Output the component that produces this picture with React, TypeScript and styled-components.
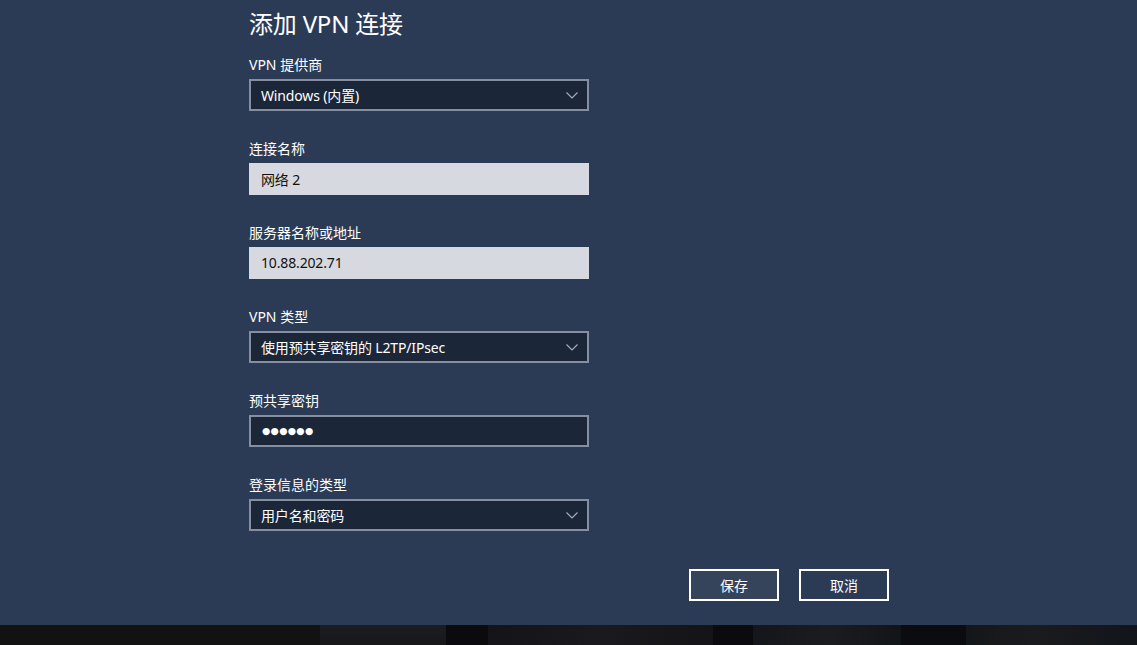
import React from "react";
import styled, { createGlobalStyle } from "styled-components";

const Global = createGlobalStyle`
  html, body { margin: 0; padding: 0; background: #111111; }
  body { font-family: "Noto Sans", "Noto Sans CJK SC", sans-serif; }
  * { box-sizing: border-box; }
`;

const Page = styled.div`
  width: 1137px;
  height: 645px;
  display: flex;
  flex-direction: column;
  overflow: hidden;
`;

const Panel = styled.div`
  height: 625px;
  background: #2b3b55;
  padding: 8px 0 0 249px;
`;

const Form = styled.div`
  width: 640px;
  display: flex;
  flex-direction: column;
`;

const Title = styled.h1`
  margin: 0 0 15px;
  font-family: "Noto Sans", "Noto Sans CJK SC", sans-serif;
  font-weight: 400;
  font-size: 24px;
  letter-spacing: -0.2px;
  line-height: 32px;
  color: #ffffff;
`;

const Field = styled.div`
  width: 340px;
  display: flex;
  flex-direction: column;
  gap: 4px;
  margin-bottom: 28px;
`;

const Label = styled.div`
  font-size: 14px;
  line-height: 20px;
  color: #ffffff;
`;

const Box = styled.div<{ $light?: boolean }>`
  height: 32px;
  display: flex;
  align-items: center;
  justify-content: space-between;
  padding: 0 9px 1px 10px;
  font-size: 14px;
  letter-spacing: -0.15px;
  color: ${(p) => (p.$light ? "#111111" : "#ffffff")};
  background: ${(p) => (p.$light ? "#d6d9e0" : "#1c2639")};
  border: 2px solid ${(p) => (p.$light ? "#d6d9e0" : "#858fa0")};
`;

const Dots = styled.span`
  font-family: "DejaVu Sans", sans-serif;
  font-size: 9.5px;
  letter-spacing: 0.3px;
  color: #ffffff;
  padding-left: 1px;
`;

const ChevronIcon = styled.svg`
  flex-shrink: 0;
  margin-top: 1px;
`;

const Chevron = () => (
  <ChevronIcon width="12" height="7" viewBox="0 0 12 7">
    <polyline points="0.5,0.5 6,6 11.5,0.5" fill="none" stroke="#a9b0bc" strokeWidth="1.1" />
  </ChevronIcon>
);

const Buttons = styled.div`
  display: flex;
  justify-content: flex-end;
  gap: 20px;
  margin-top: 10px;
`;

const Button = styled.button<{ $primary?: boolean }>`
  width: 90px;
  height: 32px;
  border: 2px solid #ffffff;
  background: ${(p) => (p.$primary ? "#36445b" : "#2b3b55")};
  color: #ffffff;
  font-family: "Noto Sans", "Noto Sans CJK SC", sans-serif;
  font-size: 14px;
  padding: 0;
`;

const Strip = styled.div`
  height: 20px;
  display: flex;
`;

const Seg = styled.div<{ $w: number; $bg: string }>`
  width: ${(p) => p.$w}px;
  background: ${(p) => p.$bg};
  flex-shrink: 0;
`;

const segs: [number, string][] = [
  [320, "#121212"],
  [126, "linear-gradient(180deg,#1c1d22,#17171a)"],
  [42, "#0b0b0d"],
  [225, "linear-gradient(100deg,#141318,#1a191d 50%,#141417)"],
  [40, "#0b0b0d"],
  [148, "linear-gradient(90deg,#13161a,#1b1c1f 50%,#121518)"],
  [65, "#0a0c0f"],
  [171, "linear-gradient(90deg,#141719,#1a1b1d 40%,#11151a)"],
];

export default function App() {
  return (
    <Page>
      <Global />
      <Panel>
        <Form>
          <Title>添加 VPN 连接</Title>
          <Field>
            <Label>VPN 提供商</Label>
            <Box>
              <span>Windows (内置)</span>
              <Chevron />
            </Box>
          </Field>
          <Field>
            <Label>连接名称</Label>
            <Box $light>网络 2</Box>
          </Field>
          <Field>
            <Label>服务器名称或地址</Label>
            <Box $light>10.88.202.71</Box>
          </Field>
          <Field>
            <Label>VPN 类型</Label>
            <Box>
              <span>使用预共享密钥的 L2TP/IPsec</span>
              <Chevron />
            </Box>
          </Field>
          <Field>
            <Label>预共享密钥</Label>
            <Box>
              <Dots>●●●●●●</Dots>
            </Box>
          </Field>
          <Field>
            <Label>登录信息的类型</Label>
            <Box>
              <span>用户名和密码</span>
              <Chevron />
            </Box>
          </Field>
          <Buttons>
            <Button $primary>保存</Button>
            <Button>取消</Button>
          </Buttons>
        </Form>
      </Panel>
      <Strip>
        {segs.map(([w, bg], i) => (
          <Seg key={i} $w={w} $bg={bg} />
        ))}
      </Strip>
    </Page>
  );
}
